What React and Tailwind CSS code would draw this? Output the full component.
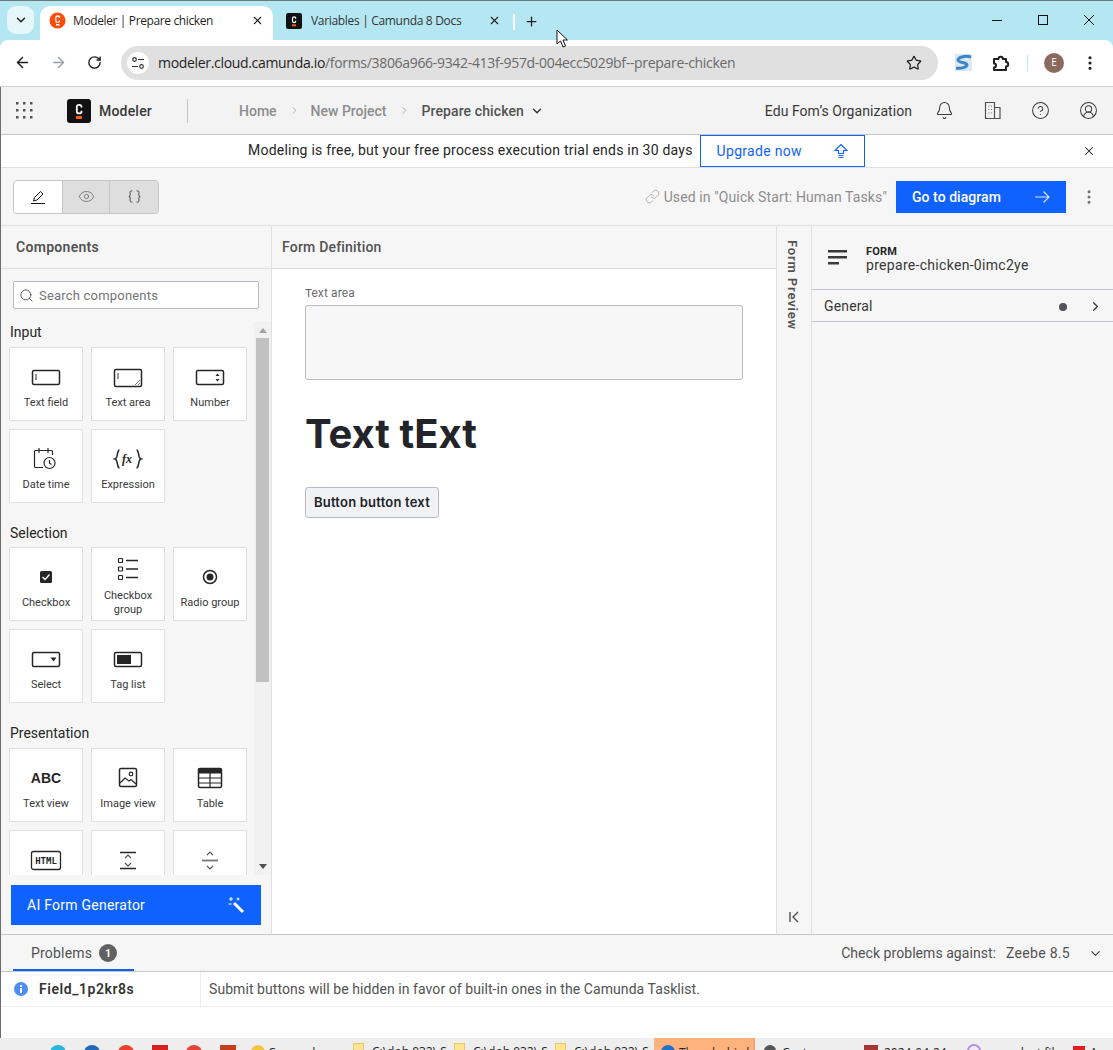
import { Bell, CircleHelp, CircleUserRound, ChevronDown, ChevronRight, X, Plus, ArrowLeft, ArrowRight, RotateCw, Star, EllipsisVertical, Search, Link, Eye, Braces } from "lucide-react";

const plex = "font-['Roboto','Noto_Sans',sans-serif]";

function Box({ children, w = 32, h = 32 }) {
  return (
    <svg width={w} height={h} viewBox={`0 0 ${w} ${h}`} fill="none" stroke="#262626" strokeWidth="1.500">
      {children}
    </svg>
  );
}

const icons = {
  textField: (
    <Box>
      <rect x="2.500" y="9.500" width="27" height="14" rx="1.500" />
      <path d="M6 13v6" stroke="#777" />
    </Box>
  ),
  textArea: (
    <Box>
      <rect x="2.500" y="8.500" width="27" height="17" rx="1.500" />
      <path d="M6 12v6" stroke="#777" />
      <path d="M23 24l5-5M26 24l2-2" stroke="#777" strokeWidth="1" />
    </Box>
  ),
  number: (
    <Box>
      <rect x="2.500" y="9.500" width="27" height="14" rx="1.500" />
      <path d="M21.500 15l2-2.500 2 2.500zM21.500 18l2 2.500 2-2.500z" fill="#262626" stroke="none" />
    </Box>
  ),
  date: (
    <Box>
      <path d="M13 24.500H5.500a1 1 0 0 1-1-1V8.500a1 1 0 0 1 1-1h16a1 1 0 0 1 1 1V12M9 5v5M18 5v5" strokeWidth="1.200" />
      <circle cx="19.500" cy="20" r="5.500" strokeWidth="1.200" />
      <path d="M19.500 17v3.200l2 1.300" strokeWidth="1.200" />
    </Box>
  ),
  expression: (
    <Box>
      <path d="M7.500 7C4.500 7 6.500 15 3 16c3.500 1 1.500 9 4.500 9M24.500 7c3 0 1 8 4.500 9-3.500 1-1.500 9-4.500 9" strokeWidth="1.500" />
      <text x="10" y="20" fontSize="12" fontStyle="italic" fontWeight="700" fontFamily="'Liberation Serif',serif" fill="#262626" stroke="none">fx</text>
    </Box>
  ),
  checkbox: (
    <Box>
      <rect x="10" y="10" width="12" height="12" rx="1.500" fill="#262626" stroke="none" />
      <path d="M12.500 16l2.500 2.500 4.500-5" stroke="#fff" strokeWidth="1.300" />
    </Box>
  ),
  checkGroup: (
    <Box>
      <rect x="6.500" y="4.500" width="4" height="4" rx="0.500" strokeWidth="1.200" />
      <rect x="6.500" y="13" width="4" height="4" rx="0.500" strokeWidth="1.200" />
      <rect x="6.500" y="21.500" width="4" height="4" rx="0.500" strokeWidth="1.200" />
      <path d="M14 6.500h12M14 15h12M14 23.500h12" />
    </Box>
  ),
  radio: (
    <Box>
      <circle cx="16" cy="16" r="6.500" />
      <circle cx="16" cy="16" r="3.500" fill="#262626" stroke="none" />
    </Box>
  ),
  select: (
    <Box>
      <rect x="2.500" y="9.500" width="27" height="14" rx="1.500" />
      <path d="M20.500 14.500h6l-3 4z" fill="#262626" stroke="none" />
    </Box>
  ),
  tagList: (
    <Box>
      <rect x="2.500" y="9.500" width="27" height="14" rx="1.500" />
      <rect x="5" y="12" width="14" height="9" fill="#262626" stroke="none" />
    </Box>
  ),
  abc: <span className="font-['Liberation_Sans',sans-serif] text-[14px] font-bold text-[#262626]">ABC</span>,
  image: (
    <Box>
      <rect x="7.500" y="6.500" width="17" height="18" rx="1.500" />
      <circle cx="19" cy="12" r="1.800" strokeWidth="1.200" />
      <path d="M8 21l5-5 4 3 2-1.500 5 4.500" strokeWidth="1.200" />
    </Box>
  ),
  table: (
    <Box>
      <rect x="4.500" y="6.500" width="23" height="19" rx="1.500" />
      <rect x="4.500" y="6.500" width="23" height="5" fill="#262626" stroke="none" />
      <path d="M4.500 16h23M4.500 21h23M16 11v14" strokeWidth="1.200" />
    </Box>
  ),
  html: (
    <svg width="32" height="32" viewBox="0 0 32 32" fill="none">
      <rect x="1.500" y="7.500" width="29" height="18" rx="2" stroke="#262626" strokeWidth="1.300" />
      <text x="16" y="20" fontSize="9" fontWeight="700" textAnchor="middle" fontFamily="'DejaVu Sans Mono',monospace" fill="#262626">HTML</text>
    </svg>
  ),
  spacer: (
    <Box>
      <path d="M8 8.500h16M8 24.500h16" />
      <path d="M13 14l3-3 3 3M13 19l3 3 3-3" stroke="#555" strokeWidth="1.200" />
    </Box>
  ),
  separator: (
    <Box>
      <path d="M8 16.500h16" stroke="#777" strokeWidth="1.800" />
      <path d="M13 11l3-3 3 3M13 22l3 3 3-3" stroke="#555" strokeWidth="1.200" />
    </Box>
  ),
};

function Card({ icon, label }) {
  return (
    <div className="flex h-[74px] w-[74px] flex-col items-center justify-center gap-[2px] border border-[#e0e0e0] bg-white pt-[2px]">
      <div className="flex h-[34px] items-center justify-center">{icons[icon]}</div>
      <div className="text-center text-[11px] leading-[14px] text-[#393939]">{label}</div>
    </div>
  );
}

function Group({ title, items, className, titleGap = "mb-[5px]" }) {
  return (
    <div className={className}>
      <div className={`${titleGap} ml-[9px] text-[14px] leading-[20px] text-[#262626]`}>{title}</div>
      <div className="ml-[8px] grid w-[238px] grid-cols-[74px_74px_74px] gap-[8px]">
        {items.map(([icon, label]) => (
          <Card key={icon} icon={icon} label={label} />
        ))}
      </div>
    </div>
  );
}

function CamundaLogo({ size = 24, bg = "#111", rounded = 3 }) {
  return (
    <svg width={size} height={size} viewBox="0 0 24 24">
      <rect width="24" height="24" rx={rounded} fill={bg} />
      <path d="M14.500 8.500V7.800c0-1.200-.8-2-2.300-2s-2.400.8-2.400 2v4.600c0 1.200.9 2 2.400 2s2.300-.8 2.300-2v-.7" fill="none" stroke="#fff" strokeWidth="1.800" />
      <rect x="9" y="17" width="6" height="3" fill="#fc5d0d" />
    </svg>
  );
}

function TabStrip() {
  return (
    <div className="flex h-[40px] shrink-0 border-t border-[#6c7a7e] bg-[#b5e7f3] text-[12px] text-[#1f1f1f] font-['Open_Sans',sans-serif]">
      <div className="ml-[7px] mt-[5px] flex h-[28px] w-[27px] items-center justify-center rounded-[9px] bg-[#e6f7fb]">
        <ChevronDown size={14} strokeWidth={2.500} />
      </div>
      <div className="ml-[6px] mt-[5px] flex h-[34px] w-[233px] items-center rounded-t-[10px] bg-white pb-[5px] pl-[9px]">
        <svg width="17" height="17" viewBox="0 0 17 17">
          <circle cx="8.500" cy="8.500" r="8" fill="#fc4d0d" />
          <path d="M10.500 6V5.500c0-1-.7-1.500-1.800-1.500S6.900 4.500 6.900 5.500v3.400c0 1 .7 1.500 1.800 1.500s1.800-.5 1.800-1.500V8.500" fill="none" stroke="#fff" strokeWidth="1.300" />
          <rect x="7" y="12" width="3.500" height="1.500" fill="#fff" />
        </svg>
        <span className="ml-[7px] w-[178px] truncate tracking-[-0.38px]">Modeler | Prepare chicken</span>
        <X size={13} strokeWidth={2} />
      </div>
      <div className="ml-[13px] mt-[5px] flex h-[34px] items-center pb-[5px]">
        <CamundaLogo size={16} rounded={3} />
        <span className="ml-[9px] w-[177px] truncate tracking-[-0.32px] text-[#333]">Variables | Camunda 8 Docs</span>
        <X size={13} strokeWidth={2} />
      </div>
      <div className="ml-[12px] mt-[13px] h-[16px] w-[2px] bg-white" />
      <Plus className="ml-[9px] mt-[13px]" size={15} strokeWidth={2} />
      <div className="ml-auto mr-[17px] flex h-[39px] items-start gap-[32px] pt-[12px]">
        <svg width="14" height="14" viewBox="0 0 14 14" stroke="#111" strokeWidth="1"><path d="M2 7.500h10" /></svg>
        <svg width="14" height="14" viewBox="0 0 14 14" fill="none" stroke="#111" strokeWidth="1"><rect x="2.500" y="2.500" width="9" height="9" /></svg>
        <svg width="14" height="14" viewBox="0 0 14 14" stroke="#111" strokeWidth="1"><path d="M2 2l10 10M12 2L2 12" /></svg>
      </div>
    </div>
  );
}

function BrowserBar() {
  return (
    <div className="flex h-[47px] shrink-0 items-center rounded-t-[8px] border-b border-[#d0d0d0] bg-white pb-[1px] text-[#1f1f1f]">
      <ArrowLeft className="ml-[14px]" size={17} strokeWidth={2} />
      <ArrowRight className="ml-[19px] text-[#9aa0a6]" size={17} strokeWidth={2} />
      <RotateCw className="ml-[20px]" size={15} strokeWidth={2.200} />
      <div className="ml-[19px] flex h-[34px] w-[817px] items-center rounded-full bg-[#e0e0e0] pl-[6px] pr-[16px]">
        <div className="flex h-[22px] w-[22px] items-center justify-center rounded-full bg-white">
          <svg width="14" height="14" viewBox="0 0 14 14" fill="none" stroke="#333" strokeWidth="1.200">
            <circle cx="3.500" cy="3.500" r="1.800" />
            <circle cx="10.500" cy="10.500" r="1.800" />
            <path d="M7 3.500h6M1 10.500h6" />
          </svg>
        </div>
        <div className="ml-[9px] font-['Open_Sans',sans-serif] text-[14px] tracking-[-0.32px] text-[#6a6a6a]">
          <span className="text-[#1f1f1f]">modeler.cloud.camunda.io</span>/forms/3806a966-9342-413f-957d-004ecc5029bf--prepare-chicken
        </div>
        <Star className="ml-auto" size={16} strokeWidth={1.800} />
      </div>
      <svg className="ml-[17px]" width="17" height="17" viewBox="0 0 17 17">
        <rect width="17" height="17" fill="#dbe9f3" />
        <path d="M16 3C9 1 3 4 3 6c0 3 9 2 9 5 0 2-6 4-11 3" fill="none" stroke="#3d85c6" strokeWidth="3" />
      </svg>
      <svg className="ml-[20px]" width="18" height="18" viewBox="0 0 18 18" fill="none" stroke="#1f1f1f" strokeWidth="2">
        <path d="M2 5h4.500a2.200 2.200 0 0 1 4.400 0H14v3a2.200 2.200 0 0 1 0 4.400V16H2v-2.500a2 2 0 0 0 0-4z" strokeLinejoin="round" />
      </svg>
      <div className="ml-[17px] h-[16px] w-px bg-[#b5e7f3]" />
      <div className="ml-[16px] flex h-[20px] w-[20px] items-center justify-center rounded-full bg-[#8b6a5e] font-['Open_Sans',sans-serif] text-[10px] text-white">E</div>
      <EllipsisVertical className="ml-[17px]" size={18} strokeWidth={2.200} />
    </div>
  );
}

function AppHeader() {
  return (
    <div className={`flex h-[48px] shrink-0 items-center border-b border-[#c6c6c6] bg-[#f3f3f3] text-[14px] ${plex}`}>
      <svg className="ml-[14px]" width="19" height="19" viewBox="0 0 19 19" fill="#525252">
        {[1, 8, 15].map((y) => [1, 8, 15].map((x) => <rect key={`${x}-${y}`} x={x} y={y} width="2.500" height="2.500" />))}
      </svg>
      <div className="ml-[33px]">
        <CamundaLogo size={24} rounded={3} />
      </div>
      <span className="ml-[8px] pt-[2px] font-medium tracking-[0.2px] text-[#393939]">Modeler</span>
      <div className="ml-[35px] h-[24px] w-px bg-[#c6c6c6]" />
      <span className="ml-[51px] pt-[2px] font-medium text-[#8d8d8d]">Home</span>
      <ChevronRight className="ml-[12px] text-[#a8a8a8]" size={11} />
      <span className="ml-[11px] pt-[2px] font-medium text-[#8d8d8d]">New Project</span>
      <ChevronRight className="ml-[12px] text-[#a8a8a8]" size={11} />
      <span className="ml-[12px] pt-[2px] font-medium tracking-[0.1px] text-[#525252]">Prepare chicken</span>
      <ChevronDown className="ml-[6px] text-[#393939]" size={14} strokeWidth={2.500} />
      <span className="ml-auto pt-[2px] tracking-[0.05px] text-[#393939]">Edu Fom’s Organization</span>
      <Bell className="ml-[23px] text-[#393939]" size={19} strokeWidth={1.300} />
      <svg className="ml-[29px]" width="19" height="19" viewBox="0 0 19 19" fill="none" stroke="#525252" strokeWidth="1.200">
        <path d="M2.500 17.500v-16h9v16zM11.500 6.500h5.500v11h-5.500" />
        <path d="M5.500 5h.8M8 5h.8M5.500 8.500h.8M8 8.500h.8M5.500 12h.8M8 12h.8" />
      </svg>
      <CircleHelp className="ml-[29px] text-[#393939]" size={19} strokeWidth={1.300} />
      <CircleUserRound className="ml-[29px] mr-[15px] text-[#393939]" size={19} strokeWidth={1.300} />
    </div>
  );
}

function Banner() {
  return (
    <div className={`flex h-[33px] shrink-0 border-b border-[#e0e0e0] bg-white text-[14px] text-[#262626] ${plex}`}>
      <span className="ml-[247px] self-center pb-[1px] tracking-[0.22px]">Modeling is free, but your free process execution trial ends in 30 days</span>
      <div className="ml-[7px] flex h-[32px] w-[165px] items-center border border-[#0f62fe] pl-[16px] pr-[15px] text-[#0f62fe]">
        <span className="tracking-[0.3px]">Upgrade now</span>
        <svg className="ml-auto" width="16" height="16" viewBox="0 0 16 16" fill="none" stroke="#0f62fe" strokeWidth="1.100">
          <path d="M8 1.500L2 7.500h3.500v3h5v-3H14zM5.500 12.500h5M5.500 14.500h5" />
        </svg>
      </div>
      <X className="ml-auto mr-[17px] self-center" size={14} strokeWidth={1.800} />
    </div>
  );
}

function FormToolbar() {
  return (
    <div className={`flex h-[58px] shrink-0 items-center border-b border-[#e0e0e0] bg-[#f6f6f6] text-[14px] ${plex}`}>
      <div className="ml-[12px] flex h-[34px] w-[146px] overflow-hidden rounded-[4px] border border-[#c6c6c6] bg-[#dedede]">
        <div className="flex w-[48px] items-center justify-center bg-white">
          <svg width="16" height="16" viewBox="0 0 16 16" fill="none" stroke="#161616" strokeWidth="1">
            <path d="M1 14.500h14M3.500 12l1-3.500 6-6 2.500 2.500-6 6z" />
          </svg>
        </div>
        <div className="flex w-[48px] items-center justify-center border-x border-[#c6c6c6]">
          <Eye size={17} strokeWidth={1.200} className="text-[#6f6f6f]" />
        </div>
        <div className="flex flex-1 items-center justify-center">
          <Braces size={15} strokeWidth={1.400} className="text-[#393939]" />
        </div>
      </div>
      <Link className="ml-auto text-[#a8a8a8]" size={15} strokeWidth={1.400} />
      <span className="ml-[4px] pt-[2px] tracking-[0.11px] text-[#8d8d8d]">Used in "Quick Start: Human Tasks"</span>
      <div className="ml-[9px] flex h-[32px] w-[170px] items-center justify-between bg-[#0f62fe] pl-[16px] pr-[16px] text-white">
        <span className="pt-[2px] font-medium tracking-[0.05px]">Go to diagram</span>
        <svg width="16" height="16" viewBox="0 0 16 16" fill="none" stroke="#dce6ff" strokeWidth="1.100">
          <path d="M1 8h14M9.500 2.500L15 8l-5.500 5.500" />
        </svg>
      </div>
      <EllipsisVertical className="ml-[14px] mr-[15px] text-[#6f6f6f]" size={18} strokeWidth={2} />
    </div>
  );
}

function Sidebar() {
  return (
    <div className={`flex w-[271px] shrink-0 flex-col border-r border-[#e0e0e0] bg-[#f6f6f6] ${plex}`}>
      <div className="flex h-[43px] shrink-0 items-center border-b border-[#dcdce2] pl-[15px] pt-[1px] text-[14px] font-semibold tracking-[0.3px] text-[#525252]">Components</div>
      <div className="ml-[12px] mt-[12px] flex h-[28px] w-[246px] shrink-0 items-center rounded-[2px] border border-[#b9b9c3] bg-white pl-[4px] text-[13px] text-[#757575]">
        <Search size={15} strokeWidth={1.500} className="mr-[5px] ml-[1px] text-[#525252]" />
        <span className="pt-[2px] tracking-[0.2px]">Search components</span>
      </div>
      <div className="mt-[13px] flex h-[553px] shrink-0 overflow-hidden">
        <div className="w-[253px] shrink-0 overflow-hidden">
          <Group
            title="Input"
            items={[["textField", "Text field"], ["textArea", "Text area"], ["number", "Number"], ["date", "Date time"], ["expression", "Expression"]]}
          />
          <Group
            className="mt-[20px]"
            titleGap="mb-[4px]"
            title="Selection"
            items={[["checkbox", "Checkbox"], ["checkGroup", "Checkbox group"], ["radio", "Radio group"], ["select", "Select"], ["tagList", "Tag list"]]}
          />
          <Group
            className="mt-[20px]"
            title="Presentation"
            items={[["abc", "Text view"], ["image", "Image view"], ["table", "Table"], ["html", "HTML view"], ["spacer", "Spacer"], ["separator", "Separator"]]}
          />
        </div>
        <div className="flex w-[17px] flex-col items-center bg-[#f1f1f1]">
          <svg className="mt-[6px]" width="8" height="5" viewBox="0 0 8 5"><path d="M0 5l4-5 4 5z" fill="#a3a3a3" /></svg>
          <div className="mt-[5px] h-[344px] w-[13px] bg-[#c1c1c1]" />
          <svg className="mt-auto mb-[6px]" width="8" height="5" viewBox="0 0 8 5"><path d="M0 0l4 5 4-5z" fill="#505050" /></svg>
        </div>
      </div>
      <div className="ml-[10px] mt-[10px] flex h-[40px] w-[250px] shrink-0 items-center justify-between bg-[#0f62fe] pl-[16px] pr-[16px] text-[14px] tracking-[0.25px] text-white">
        <span>AI Form Generator</span>
        <svg width="18" height="18" viewBox="0 0 18 18" fill="none" stroke="#fff">
          <path d="M7 7l9 9" strokeWidth="3" />
          <path d="M4 1v4M2 3h4M1.500 8h3M11 1.500v3M9.500 3h3" strokeWidth="1" />
        </svg>
      </div>
    </div>
  );
}

function Canvas() {
  return (
    <div className={`flex flex-1 flex-col bg-white ${plex}`}>
      <div className="flex h-[43px] shrink-0 items-center border-b border-[#dcdce2] bg-[#f6f6f6] pt-[1px] pl-[10px] text-[14px] font-medium tracking-[0.2px] text-[#525252]">Form Definition</div>
      <div className="pl-[33px] pr-[33px] font-['Inter',sans-serif]">
        <div className="mt-[17px] text-[11px] leading-[14px] tracking-[0.2px] text-[#5d5d68]">Text area</div>
        <div className="mt-[5px] h-[75px] w-[438px] rounded-[3px] border border-[#babac4] bg-[#f7f7f7]" />
        <div className="mt-[29px] text-[40px] font-bold leading-[50px] text-[#22242a]">Text tExt</div>
        <div className="mt-[28px] flex h-[31px] w-[134px] items-center justify-center rounded-[3px] border border-[#babac4] bg-[#f1f2f4] text-[13px] font-semibold tracking-[0.2px] text-[#22242a]">Button button text</div>
      </div>
    </div>
  );
}

function PreviewRail() {
  return (
    <div className={`flex w-[36px] shrink-0 flex-col items-center border-x border-[#e0e0e0] bg-[#f6f6f6] ${plex}`}>
      <div className="mt-[14px] pr-[4px] text-[13px] font-semibold leading-[16px] tracking-[0.85px] text-[#525252] [writing-mode:vertical-rl]">Form Preview</div>
      <svg className="mb-[11px] mt-auto" width="12" height="12" viewBox="0 0 12 12" fill="none" stroke="#525252" strokeWidth="1.400">
        <path d="M2 1v10M10 1L5 6l5 5" />
      </svg>
    </div>
  );
}

function Properties() {
  return (
    <div className={`flex flex-1 flex-col bg-[#f6f6f6] ${plex}`}>
      <div className="flex h-[64px] shrink-0 items-center border-b border-[#c3c3cb] pt-[3px]">
        <svg className="ml-[16px] -mt-[3px]" width="20" height="18" viewBox="0 0 20 18" fill="#393939">
          <rect y="1" width="19" height="2.500" />
          <rect y="7" width="19" height="2.500" />
          <rect y="13" width="11" height="2.500" />
        </svg>
        <div className="ml-[18px]">
          <div className="text-[11px] font-bold leading-[13px] tracking-[0.2px] text-[#262626]">FORM</div>
          <div className="text-[14px] leading-[15px] tracking-[0.3px] text-[#393939]">prepare-chicken-0imc2ye</div>
        </div>
      </div>
      <div className="flex h-[32px] shrink-0 items-center border-b border-[#c3c3cb] pl-[12px] pr-[10px] pt-[2px] text-[14px] tracking-[0.15px] text-[#393939]">
        <span>General</span>
        <div className="ml-auto h-[8px] w-[8px] rounded-full bg-[#52525b]" />
        <ChevronRight className="ml-[21px] text-[#393939]" size={15} strokeWidth={2} />
      </div>
    </div>
  );
}

function Problems() {
  return (
    <div className={`shrink-0 ${plex}`}>
      <div className="flex h-[38px] items-start border-y border-[#c6c6c6] bg-[#f6f6f6] text-[14px]">
        <div className="ml-[12px] flex h-[36px] w-[121px] items-center border-b-2 border-[#0f62fe] pl-[18px] pt-[2px] text-[#525252]">
          <span className="tracking-[0.2px]">Problems</span>
          <span className="ml-[7px] flex h-[18px] w-[18px] items-center justify-center rounded-full bg-[#616161] text-[10px] font-bold text-white">1</span>
        </div>
        <div className="ml-auto flex h-[36px] items-center pr-[10px] text-[#525252]">
          <span className="tracking-[0.05px]">Check problems against:</span>
          <span className="ml-[10px] tracking-[0.3px]">Zeebe 8.5</span>
          <ChevronDown className="ml-[18px] text-[#393939]" size={15} strokeWidth={1.800} />
        </div>
      </div>
      <div className="flex h-[35px] items-stretch border-b border-[#ededed] bg-white text-[14px]">
        <div className="flex w-[200px] items-center border-r border-[#ededed] pl-[13px]">
          <svg width="14" height="14" viewBox="0 0 14 14">
            <circle cx="7" cy="7" r="7" fill="#4d8dfa" />
            <rect x="6" y="6" width="2" height="5" fill="#fff" />
            <rect x="6" y="3" width="2" height="2" fill="#fff" />
          </svg>
          <span className="ml-[11px] font-semibold tracking-[0.55px] text-[#333]">Field_1p2kr8s</span>
        </div>
        <div className="flex items-center pl-[8px] tracking-[0.07px] text-[#525252]">Submit buttons will be hidden in favor of built-in ones in the Camunda Tasklist.</div>
      </div>
    </div>
  );
}

function Taskbar() {
  const icon = "h-[16px] w-[16px] shrink-0";
  const folder = (
    <div className="flex w-[101px] shrink-0 items-start">
      <div className="h-[14px] w-[11px] border border-[#e5c964] bg-[#fde591]" />
      <span className="ml-[8px]">C:\doh 032\ S</span>
    </div>
  );
  return (
    <div className="flex h-[12px] shrink-0 items-start overflow-hidden bg-[#eeeeee] pl-[50px] font-['Open_Sans',sans-serif] text-[12px] leading-[18px] text-[#222]">
      <div className={`${icon} mt-[7px] rounded-full bg-[#2bb5d8]`} />
      <div className={`${icon} ml-[18px] mt-[7px] rounded-full bg-[#2468b8]`} />
      <div className={`${icon} ml-[18px] mt-[7px] rounded-full bg-[#e8412c]`} />
      <div className={`${icon} ml-[18px] mt-[7px] bg-[#d8201c]`} />
      <div className={`${icon} ml-[18px] mt-[7px] rounded-full bg-[#df4436]`} />
      <div className={`${icon} ml-[18px] mt-[7px] bg-[#c43e1c]`} />
      <div className="ml-[15px] mt-[7px] h-[14px] w-[14px] shrink-0 rounded-full bg-[#f4c542]" />
      <span className="ml-[3px] mt-[6px] w-[85px] shrink-0">Camunda</span>
      <div className="mt-[5px] flex shrink-0">{folder}{folder}{folder}</div>
      <div className="-ml-[2px] flex h-[12px] w-[101px] shrink-0 border-r-2 border-[#f5a66f] bg-[#feb27d] pl-[7px] pt-[6px]">
        <div className="mt-[1px] h-[14px] w-[14px] shrink-0 rounded-full bg-[#1f73c9]" />
        <span className="ml-[4px]">Thunderbird</span>
      </div>
      <div className="ml-[9px] mt-[7px] h-[12px] w-[12px] shrink-0 rounded-full bg-[#555]" />
      <span className="ml-[6px] mt-[6px] w-[82px] shrink-0">Customer</span>
      <div className="mt-[7px] h-[14px] w-[14px] shrink-0 bg-[#a33]" />
      <span className="ml-[6px] mt-[6px] w-[83px] shrink-0">2024-04-24</span>
      <div className="mt-[6px] h-[14px] w-[14px] shrink-0 rounded-full border-2 border-[#b78cf0]" />
      <span className="ml-[16px] mt-[6px] w-[76px] shrink-0">product file</span>
      <div className="mt-[8px] h-[14px] w-[12px] shrink-0 bg-[#e02020]" />
      <span className="ml-[5px] mt-[6px] shrink-0">Ac</span>
    </div>
  );
}

export default function App() {
  return (
    <div className="relative flex h-[1050px] w-[1113px] flex-col overflow-hidden bg-[#b5e7f3]">
      <TabStrip />
      <BrowserBar />
      <div className="flex min-h-0 flex-1 flex-col border-l border-[#6c6c6c] bg-white">
        <AppHeader />
        <Banner />
        <FormToolbar />
        <div className="flex h-[708px] shrink-0">
          <Sidebar />
          <Canvas />
          <PreviewRail />
          <div className="flex w-[301px] shrink-0">
            <Properties />
          </div>
        </div>
        <Problems />
      </div>
      <Taskbar />
      <svg className="absolute left-[556px] top-[29px]" width="14" height="20" viewBox="0 0 14 20">
        <path d="M1 1v14l3.500-3 2.500 6 2.500-1-2.500-6h4.500z" fill="#fff" stroke="#111" strokeWidth="1" />
      </svg>
    </div>
  );
}
